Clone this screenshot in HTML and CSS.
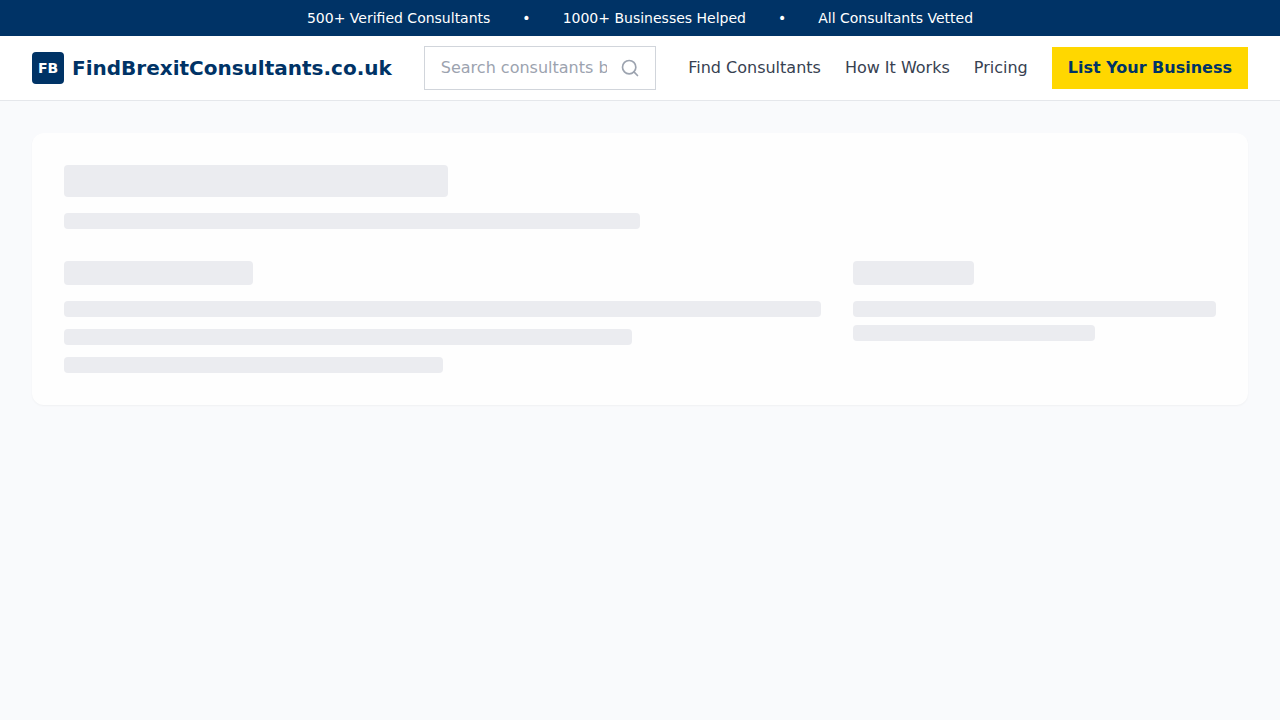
FILE: index.html
```html
<!DOCTYPE html>
<html lang="en">
<head>
<meta charset="utf-8">
<meta name="viewport" content="width=device-width, initial-scale=1">
<title>FindBrexitConsultants.co.uk</title>
<link rel="stylesheet" href="styles.css">
</head>
<body>
<div class="topbar">
  <span>500+ Verified Consultants</span>
  <span>•</span>
  <span>1000+ Businesses Helped</span>
  <span>•</span>
  <span>All Consultants Vetted</span>
</div>
<header class="header">
  <a class="brand" href="#"><span class="brand-mark">FB</span><span class="brand-name">FindBrexitConsultants.co.uk</span></a>
  <form class="search" role="search">
    <input class="search-input" type="text" aria-label="Search consultants" placeholder="Search consultants by name, service or location">
    <button class="search-button" type="button" aria-label="Search">
      <svg width="20" height="20" viewBox="0 0 24 24" fill="none" stroke="currentColor" stroke-width="2" stroke-linecap="round" stroke-linejoin="round"><circle cx="11" cy="11" r="8"/><path d="m21 21-4.3-4.3"/></svg>
    </button>
  </form>
  <nav class="nav">
    <a class="nav-link" href="#">Find Consultants</a>
    <a class="nav-link" href="#">How It Works</a>
    <a class="nav-link" href="#">Pricing</a>
    <a class="cta" href="#">List Your Business</a>
  </nav>
</header>
<main class="main">
  <div class="card" aria-busy="true">
    <div class="bar bar-title"></div>
    <div class="bar bar-subtitle"></div>
    <div class="columns">
      <div class="column column-wide">
        <div class="bar bar-heading w-quarter"></div>
        <div class="bar"></div>
        <div class="bar w-three-quarters"></div>
        <div class="bar w-half"></div>
      </div>
      <div class="column column-side">
        <div class="bar bar-heading w-third"></div>
        <div class="bar"></div>
        <div class="bar w-two-thirds"></div>
      </div>
    </div>
  </div>
</main>
</body>
</html>
```
FILE: styles.css
```css
* { box-sizing: border-box; }

body {
  margin: 0;
  min-height: 100vh;
  background: #f9fafc;
  color: #374151;
  font-family: "DejaVu Sans", sans-serif;
  font-size: 16px;
  line-height: 24px;
}

a { color: inherit; text-decoration: none; }

.topbar {
  display: flex;
  justify-content: center;
  gap: 32px;
  padding: 8px 16px;
  background: #003366;
  color: #fff;
  font-size: 14px;
  line-height: 20px;
}

.header {
  display: flex;
  align-items: center;
  gap: 32px;
  min-height: 65px;
  padding: 0 32px;
  background: #fff;
  border-bottom: 1px solid #e5e7eb;
}

.brand { display: flex; align-items: center; gap: 8px; color: #003366; font-weight: 700; }

.brand-mark {
  display: flex;
  align-items: center;
  justify-content: center;
  width: 32px;
  height: 32px;
  border-radius: 4px;
  background: #003366;
  color: #fff;
  font-size: 14px;
  line-height: 20px;
}

.brand-name { font-size: 20px; line-height: 28px; }

.search {
  display: flex;
  flex: 1;
  align-items: center;
  min-width: 0;
  height: 44px;
  padding: 0 15px 0 16px;
  gap: 13px;
  border: 1px solid #d1d5db;
  background: #fff;
}

.search-input {
  flex: 1;
  min-width: 0;
  padding: 0;
  border: 0;
  outline: 0;
  background: transparent;
  color: #374151;
  font: inherit;
}

.search-input::placeholder { color: #9ca3af; opacity: 1; }

.search-button { display: flex; padding: 0; border: 0; background: none; color: #9ca3af; }

.nav { display: flex; align-items: center; gap: 24px; white-space: nowrap; }

.cta { padding: 9px 16px; background: #ffd700; color: #003366; font-weight: 700; }

.main { padding: 32px; }

.card {
  padding: 32px;
  border-radius: 12px;
  background: #fefefe;
  box-shadow: 0 1px 2px rgba(0, 0, 0, 0.04);
}

.bar { height: 16px; border-radius: 4px; background: #ebecf0; }

.bar-title { width: calc(100% / 3); height: 32px; margin-bottom: 16px; }
.bar-subtitle { width: 50%; margin-bottom: 32px; }

.columns { display: grid; grid-template-columns: repeat(3, 1fr); gap: 32px; }
.column { display: flex; flex-direction: column; }
.column-wide { grid-column: span 2; gap: 12px; }
.column-side { gap: 8px; }

.bar-heading { height: 24px; }
.column-wide .bar-heading { margin-bottom: 4px; }
.column-side .bar-heading { margin-bottom: 8px; }

.w-quarter { width: 25%; }
.w-third { width: calc(100% / 3); }
.w-half { width: 50%; }
.w-two-thirds { width: calc(200% / 3); }
.w-three-quarters { width: 75%; }
```
